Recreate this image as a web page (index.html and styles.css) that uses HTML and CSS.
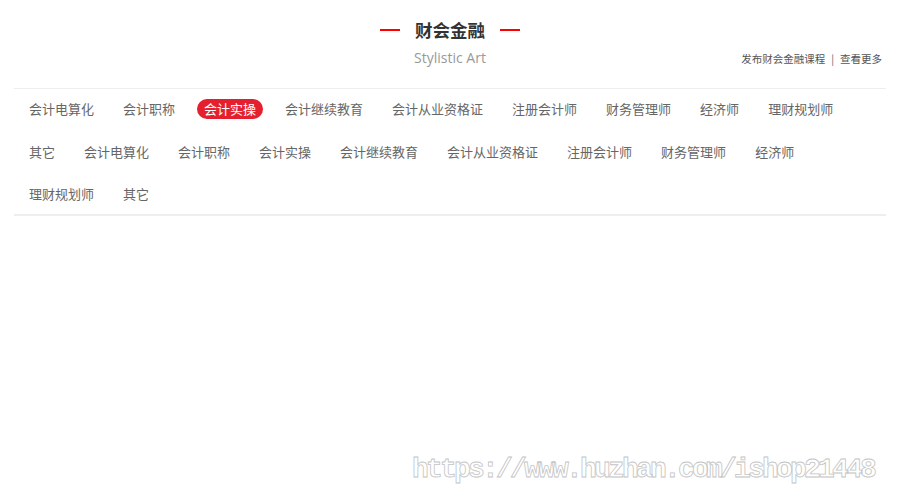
FILE: index.html
```html
<!DOCTYPE html>
<html lang="zh-CN">
<head>
<meta charset="utf-8">
<title>财会金融</title>
<link rel="stylesheet" href="styles.css">
</head>
<body>
<div class="wrap">
  <div class="head">
    <div class="title-row">
      <span class="dash"></span>
      <h2 class="title">财会金融</h2>
      <span class="dash"></span>
    </div>
    <div class="sub-row">
      <span></span>
      <span class="sub">Stylistic Art</span>
      <div class="links">
        <a href="#">发布财会金融课程</a>
        <span class="sep">|</span>
        <a href="#">查看更多</a>
      </div>
    </div>
  </div>
  <ul class="tags">
    <li class="tag">会计电算化</li>
    <li class="tag">会计职称</li>
    <li class="tag active">会计实操</li>
    <li class="tag">会计继续教育</li>
    <li class="tag">会计从业资格证</li>
    <li class="tag">注册会计师</li>
    <li class="tag">财务管理师</li>
    <li class="tag">经济师</li>
    <li class="tag">理财规划师</li>
    <li class="tag">其它</li>
    <li class="tag">会计电算化</li>
    <li class="tag">会计职称</li>
    <li class="tag">会计实操</li>
    <li class="tag">会计继续教育</li>
    <li class="tag">会计从业资格证</li>
    <li class="tag">注册会计师</li>
    <li class="tag">财务管理师</li>
    <li class="tag">经济师</li>
    <li class="tag">理财规划师</li>
    <li class="tag">其它</li>
  </ul>
</div>
<div class="watermark">https://www.huzhan.com/ishop21448</div>
</body>
</html>
```

FILE: styles.css
```css
html, body {
  margin: 0;
  padding: 0;
  background: #fff;
}
body {
  font-family: "Noto Sans CJK SC", "Noto Sans", sans-serif;
  color: #333;
  position: relative;
  height: 499px;
  overflow: hidden;
}
.wrap {
  width: 872px;
  margin: 0 auto;
}
.head {
  height: 88px;
  box-sizing: border-box;
  padding-top: 18px;
}
.title-row {
  display: flex;
  justify-content: center;
  align-items: center;
  gap: 15px;
  height: 24px;
}
.dash {
  display: block;
  width: 20px;
  height: 2px;
  background: #f00;
}
.title {
  margin: 0;
  font-size: 17.5px;
  line-height: 24px;
  font-weight: bold;
  color: #333;
}
.sub-row {
  display: grid;
  grid-template-columns: 1fr auto 1fr;
  align-items: center;
  margin-top: 4px;
  height: 24px;
}
.sub {
  font-family: "Open Sans", "Noto Sans", sans-serif;
  font-size: 14px;
  color: #999;
  line-height: 24px;
}
.links {
  justify-self: end;
  margin-right: 4px;
  font-size: 10.5px;
  color: #666;
  display: flex;
  align-items: center;
  gap: 6px;
}
.links a {
  color: #555;
  text-decoration: none;
}
.sep {
  color: #666;
}
.tags {
  list-style: none;
  margin: 0;
  padding: 10px 0 10px 8px;
  border-top: 1px solid #eee;
  border-bottom: 2px solid #eee;
  display: flex;
  flex-wrap: wrap;
  column-gap: 15px;
  row-gap: 22.5px;
}
.tag {
  height: 20px;
  line-height: 20px;
  padding: 0 7px;
  font-size: 13px;
  color: #666;
  border-radius: 10px;
  white-space: nowrap;
}
.tag.active {
  background: #e5202e;
  color: #fff;
}
.watermark {
  position: absolute;
  right: 26px;
  top: 452px;
  font-family: "Liberation Mono", monospace;
  font-size: 28px;
  font-weight: bold;
  letter-spacing: -2.8px;
  line-height: 36px;
  color: #fff;
  -webkit-text-stroke: 0.8px #c4c4c4;
}
```
